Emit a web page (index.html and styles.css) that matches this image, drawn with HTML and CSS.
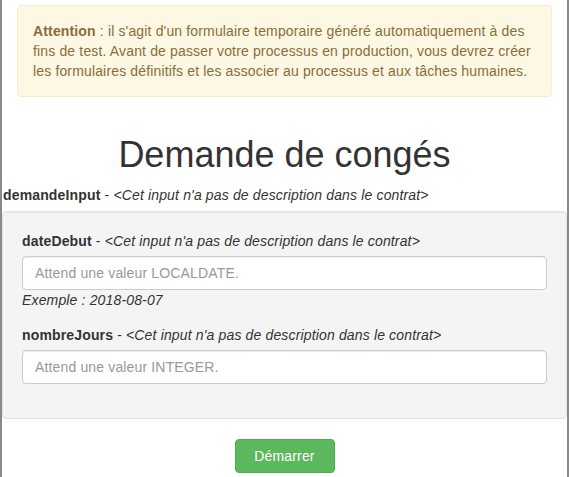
FILE: index.html
```html
<!DOCTYPE html>
<html lang="fr">
<head>
<meta charset="utf-8">
<title>Demande de congés</title>
<link rel="stylesheet" href="styles.css">
</head>
<body>
<div class="frame">
  <div class="alert">
    <strong>Attention</strong> : il s'agit d'un formulaire temporaire généré automatiquement à des fins de test. Avant de passer votre processus en production, vous devrez créer les formulaires définitifs et les associer au processus et aux tâches humaines.
  </div>
  <h1 class="title">Demande de congés</h1>
  <div class="field-label"><strong>demandeInput</strong> - <em>&lt;Cet input n'a pas de description dans le contrat&gt;</em></div>
  <div class="well">
    <div class="form-group">
      <label class="field-label"><strong>dateDebut</strong> - <em>&lt;Cet input n'a pas de description dans le contrat&gt;</em></label>
      <input class="form-control" type="text" placeholder="Attend une valeur LOCALDATE.">
      <div class="help"><em>Exemple : 2018-08-07</em></div>
    </div>
    <div class="form-group">
      <label class="field-label"><strong>nombreJours</strong> - <em>&lt;Cet input n'a pas de description dans le contrat&gt;</em></label>
      <input class="form-control" type="text" placeholder="Attend une valeur INTEGER.">
    </div>
  </div>
  <div class="actions">
    <button class="btn-success" type="button">Démarrer</button>
  </div>
</div>
</body>
</html>
```

FILE: styles.css
```css
html, body {
  margin: 0;
  padding: 0;
  background: #fff;
}
body {
  font-family: "Liberation Sans", Arial, Helvetica, sans-serif;
  font-size: 14px;
  line-height: 20px;
  letter-spacing: 0.15px;
  color: #333;
}
.frame {
  border-left: 2px solid #8a8a8a;
  border-right: 2px solid #8a8a8a;
  min-height: 477px;
  box-sizing: border-box;
  padding-top: 5px;
  overflow: hidden;
}
.alert {
  margin: 0 15px;
  padding: 15px;
  border: 1px solid #faebcc;
  border-radius: 4px;
  background: #fcf8e3;
  color: #8a6d3b;
}
.alert strong {
  font-weight: bold;
}
.title {
  margin: 38px 0 10px;
  font-size: 36px;
  line-height: 40px;
  font-weight: normal;
  letter-spacing: 0;
  text-align: center;
  color: #333;
}
.field-label {
  display: block;
  padding-left: 1px;
  margin-bottom: 6px;
}
.field-label strong {
  font-weight: bold;
}
.well {
  background: #f4f4f4;
  border: 1px solid #e3e3e3;
  border-radius: 4px;
  padding: 19px;
  box-shadow: inset 0 1px 1px rgba(0,0,0,.05);
}
.form-group {
  margin-bottom: 15px;
}
.form-group .field-label {
  padding-left: 0;
  margin-bottom: 5px;
}
.form-control {
  display: block;
  box-sizing: border-box;
  width: 100%;
  height: 34px;
  margin: 0;
  padding: 6px 12px;
  font-family: inherit;
  font-size: 14px;
  line-height: 20px;
  letter-spacing: 0.15px;
  color: #555;
  background: #fff;
  border: 1px solid #ccc;
  border-radius: 4px;
  box-shadow: inset 0 1px 1px rgba(0,0,0,.075);
}
.form-control::placeholder {
  color: #999;
  opacity: 1;
}
.help {
  color: #333;
}
.actions {
  display: flex;
  justify-content: center;
  margin-top: 20px;
}
.btn-success {
  width: 100px;
  height: 34px;
  padding: 6px 12px;
  font-family: inherit;
  font-size: 14px;
  line-height: 20px;
  letter-spacing: 0.15px;
  color: #fff;
  background: #5cb85c;
  border: 1px solid #4cae4c;
  border-radius: 4px;
  cursor: pointer;
}
```
